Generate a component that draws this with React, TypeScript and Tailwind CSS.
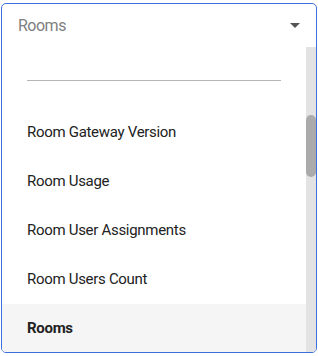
import React from 'react';

const items = ['Room Gateway Version', 'Room Usage', 'Room User Assignments', 'Room Users Count', 'Rooms'];

export default function App() {
    const selected = 'Rooms';

    return (
        <div className="w-[318px] h-[356px] bg-white pt-[3px] pl-[1px] font-['Roboto',sans-serif]">
            <div className="w-[316px] h-[350px] border border-[#3b6fe0] rounded-[5px] overflow-hidden flex flex-col">
                {/* Select header */}
                <div className="h-[43px] shrink-0 flex items-center justify-between pl-[16px] pr-[15px]">
                    <span className="text-[16px] tracking-[-0.5px] text-[#808080]">Rooms</span>
                    <svg width="10" height="5" viewBox="0 0 10 5" className="mr-[1px]">
                        <path d="M0 0 L10 0 L5 5 Z" fill="#555" />
                    </svg>
                </div>

                {/* Options list */}
                <div className="flex flex-1 min-h-0">
                    <div className="flex-1 flex flex-col">
                        <div className="h-[61px] shrink-0 px-[25px] pt-[33px]">
                            <div className="h-px bg-[#b5b5b5]" />
                        </div>
                        {items.map((label) => (
                            <div
                                key={label}
                                className={`h-[49px] shrink-0 flex items-center pl-[25px] text-[15px] tracking-[-0.3px] text-[#222] ${
                                    label === selected ? 'bg-[#f5f5f5] font-bold' : ''
                                }`}
                            >
                                {label}
                            </div>
                        ))}
                    </div>
                    {/* Scrollbar */}
                    <div className="w-[10px] bg-[#e3e3e3] pt-[68px]">
                        <div className="h-[62px] rounded-full bg-[#ababab]" />
                    </div>
                </div>
            </div>
        </div>
    );
}
